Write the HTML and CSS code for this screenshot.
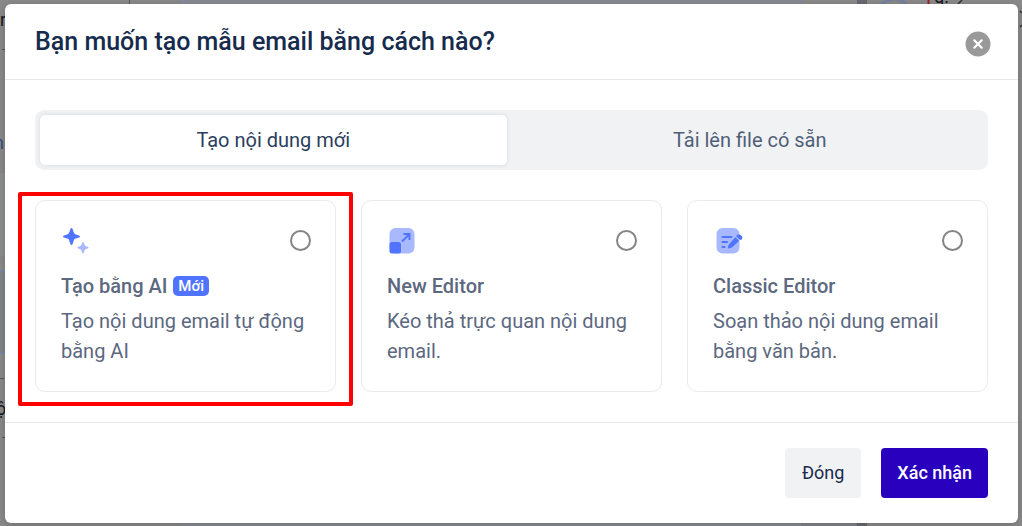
FILE: index.html
```html
<!DOCTYPE html>
<html lang="vi">
<head>
<meta charset="utf-8">
<meta name="viewport" content="width=device-width, initial-scale=1">
<title>Tạo mẫu email</title>
<link rel="stylesheet" href="styles.css">
</head>
<body>
<svg class="backdrop" width="1022" height="526" aria-hidden="true">
  <rect x="180" width="622" height="526" fill="#888c94"/>
  <path d="M129.500 0v4" stroke="#555"/>
  <path d="M180.500 0v4M801.500 0v4M0 271.500h5M0 352.500h5" stroke="#7087b8"/>
  <rect x="857" width="10" height="526" fill="#686b72"/>
  <rect x="801" y="523" width="56" height="3" fill="#82858b"/>
  <rect y="173" width="5" height="83" fill="#8e9090"/>
  <rect y="272" width="5" height="80" fill="#80848c"/>
  <path d="M2 49.500h3M0 378.500h4M2 437.500h3" stroke="#555"/>
  <circle cx="894" cy="16" r="17" fill="none" stroke="#7680a0" stroke-width="3"/>
  <path d="M928.500 0v4" stroke="#a02025" stroke-width="2"/>
  <text x="934" y="3" class="backdrop-text">q.</text>
  <path d="M958 4l4-4M1020 11l2 2M1020 27l2-2" stroke="#333" stroke-width="1.500"/>
  <text x="0" y="26" class="backdrop-text">r</text>
  <text x="-6" y="149" class="backdrop-text backdrop-link">n</text>
  <text x="-4" y="415" class="backdrop-text">ộ</text>
</svg>
<main class="modal" role="dialog" aria-labelledby="modal-title">
  <header class="modal-header">
    <h1 class="modal-title" id="modal-title">Bạn muốn tạo mẫu email bằng cách nào?</h1>
    <button class="close" type="button" aria-label="Đóng cửa sổ">
      <svg width="26" height="26" viewBox="0 0 26 26"><circle cx="13" cy="13" r="12.500" fill="#999"/><path d="M9.300 9.300l7.400 7.400M16.700 9.300l-7.400 7.400" stroke="#fff" stroke-width="2.200" stroke-linecap="round"/></svg>
    </button>
  </header>
  <div class="modal-body">
    <div class="tabs" role="tablist">
      <button class="tab tab-active" type="button" role="tab" aria-selected="true">Tạo nội dung mới</button>
      <button class="tab" type="button" role="tab" aria-selected="false">Tải lên file có sẵn</button>
    </div>
    <div class="options">
      <label class="card card-marked">
        <span class="card-top">
          <svg class="card-icon" viewBox="0 0 30 30" aria-hidden="true"><path d="M10.500 2c.6 0 .9.400 1.100 1l1 3.100c.4 1.300 1 1.900 2.300 2.300l3.100 1c.6.200 1 .5 1 1.100s-.4.900-1 1.100l-3.100 1c-1.300.4-1.900 1-2.300 2.300l-1 3.100c-.2.600-.5 1-1.100 1s-.9-.4-1.100-1l-1-3.100c-.4-1.300-1-1.900-2.300-2.300l-3.100-1c-.6-.2-1-.5-1-1.100s.4-.9 1-1.100l3.100-1c1.300-.4 1.900-1 2.300-2.300l1-3.100c.2-.6.500-1 1.100-1z" fill="#5074ff"/><path d="M22 16c.5 0 .7.400.9.900l.5 1.600c.3 1 .8 1.500 1.800 1.800l1.600.5c.5.200.9.500.9.900s-.4.700-.9.900l-1.600.5c-1 .3-1.500.8-1.800 1.800l-.5 1.600c-.2.500-.4.900-.9.900s-.7-.4-.9-.9l-.5-1.600c-.3-1-.8-1.500-1.800-1.800l-1.600-.5c-.5-.2-.9-.5-.9-.9s.4-.7.900-.9l1.600-.5c1-.3 1.500-.8 1.800-1.800l.5-1.600c.2-.5.400-.9.900-.9z" fill="#a8b9ff"/></svg>
          <input class="radio" type="radio" name="editor">
        </span>
        <span class="card-title">Tạo bằng AI <span class="badge">Mới</span></span>
        <span class="card-text">Tạo nội dung email tự động bằng AI</span>
      </label>
      <label class="card">
        <span class="card-top">
          <svg class="card-icon" viewBox="0 0 30 30" aria-hidden="true"><rect x="2.500" y="2" width="25" height="25.500" rx="6" fill="#a8b9ff"/><path d="M5 16h6.500a2.500 2.500 0 0 1 2.500 2.500v6.500a2.500 2.500 0 0 1-2.500 2.500H5A2.500 2.500 0 0 1 2.500 25v-6.500A2.500 2.500 0 0 1 5 16z" fill="#5074ff"/><path d="M15 15.500l7-7M16.500 8h6v6" fill="none" stroke="#5074ff" stroke-width="1.900"/></svg>
          <input class="radio" type="radio" name="editor">
        </span>
        <span class="card-title">New Editor</span>
        <span class="card-text">Kéo thả trực quan nội dung email.</span>
      </label>
      <label class="card">
        <span class="card-top">
          <svg class="card-icon" viewBox="0 0 30 30" aria-hidden="true"><rect x="3.500" y="2" width="23" height="25.500" rx="6" fill="#a8b9ff"/><path d="M9.500 11h9M9.500 16h4.500M9.500 21h2" stroke="#5074ff" stroke-width="2" stroke-linecap="round"/><path d="M22.300 11.300l3.900 3.500-6.700 6.100c-1 .8-2.600 1.400-4.600 1.500.1-2 .5-3.500 1.400-4.500z" fill="#5074ff"/><path d="M23.200 10.300c.5-1.800 2.300-2.100 3.900-1.300 1.600.6 2.600 1.800 2.200 3.300-.3 1.300-1.100 1.700-2.200 1.600z" fill="#5074ff"/></svg>
          <input class="radio" type="radio" name="editor">
        </span>
        <span class="card-title">Classic Editor</span>
        <span class="card-text">Soạn thảo nội dung email bằng văn bản.</span>
      </label>
    </div>
  </div>
  <footer class="modal-footer">
    <button class="btn" type="button">Đóng</button>
    <button class="btn btn-primary" type="button">Xác nhận</button>
  </footer>
</main>
</body>
</html>
```
FILE: styles.css
```css
* { box-sizing: border-box; }
body {
  margin: 0;
  padding: 4px 4px 3px 5px;
  background: #8a8a8a;
  color: #172b4d;
  font-family: Roboto, "Noto Sans", sans-serif;
  font-size: 20px;
  line-height: 30px;
}
button { border: 0; font: inherit; color: inherit; cursor: pointer; }
.backdrop { position: absolute; top: 0; left: 0; z-index: -1; }
.backdrop-text { font-size: 18px; fill: #17181d; }
.backdrop-link { fill: #354d80; }
.modal {
  background: #fff;
  border-radius: 6px;
  box-shadow: 0 2px 10px rgba(0, 0, 0, 0.2);
}
.modal-header {
  display: flex;
  align-items: center;
  justify-content: space-between;
  padding: 20px 27px 20px 30px;
  border-bottom: 1px solid #e6e8ea;
}
.modal-title { margin: 0; font-size: 25px; line-height: 35px; font-weight: 500; }
.close { display: flex; padding: 5px 0 0; background: none; }
.modal-body { padding: 30px; }
.tabs {
  display: grid;
  grid-template-columns: 1fr 1fr;
  gap: 10px;
  padding: 5px;
  border-radius: 9px;
  background: #f1f2f4;
}
.tab {
  padding: 10px;
  border-radius: 5px;
  background: none;
  color: #505f79;
}
.tab-active { background: #fff; color: #2c3e5d; box-shadow: 0 0 4px rgba(9, 30, 66, 0.12); }
.options {
  display: grid;
  grid-template-columns: repeat(3, 1fr);
  gap: 25px;
  margin-top: 30px;
}
.card {
  position: relative;
  display: flex;
  flex-direction: column;
  padding: 25px;
  border: 1px solid #e8eaed;
  border-radius: 10px;
  color: #5c6880;
  cursor: pointer;
}
.card-marked::after {
  content: "";
  position: absolute;
  inset: -9px -18px -15px -18px;
  border: 4px solid #f00;
  border-radius: 2px;
  pointer-events: none;
}
.card-top { display: flex; justify-content: space-between; height: 30px; margin-bottom: 15px; }
.card-icon { width: 30px; height: 30px; }
.radio {
  appearance: none;
  width: 21px;
  height: 21px;
  margin: 4px -1px 0 0;
  border: 2px solid #858585;
  border-radius: 50%;
}
.radio:checked { border: 6px solid #5074ff; }
.card-title { margin-bottom: 5px; font-weight: 500; }
.badge {
  display: inline-block;
  margin-left: 1px;
  padding: 0 5px;
  border-radius: 5px;
  background: #5074ff;
  color: #fff;
  font-size: 15px;
  line-height: 20px;
  vertical-align: 2px;
}
.modal-footer {
  display: flex;
  justify-content: flex-end;
  gap: 20px;
  padding: 25px 30px;
  border-top: 1px solid #e6e8ea;
}
.btn {
  padding: 10px 17px;
  border-radius: 4px;
  background: #f1f2f4;
  font-size: 18px;
}
.btn-primary { padding: 10px 16px; background: #2900be; color: #fff; font-weight: 500; }
```
